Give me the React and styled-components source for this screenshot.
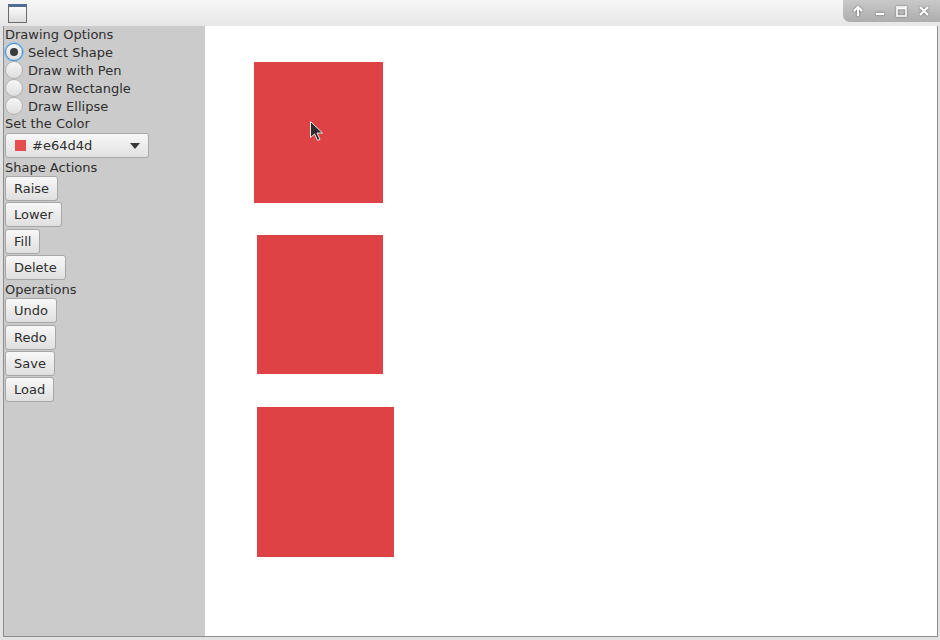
// Drawing app window: options sidebar on the left, shape canvas on the right

import React from 'react'
import styled, { createGlobalStyle } from 'styled-components'

const GlobalStyle = createGlobalStyle`
  html, body {
    margin: 0;
    padding: 0;
  }
  body {
    font-family: "DejaVu Sans", "Liberation Sans", sans-serif;
    background: #e4e4e4;
  }
`

//Styles
const Screen = styled.div`
  width: 940px;
  height: 640px;
  display: flex;
  flex-direction: column;
  overflow: hidden;
  background: #e2e2e2;
`

const TitleBar = styled.div`
  height: 26px;
  flex: none;
  display: flex;
  justify-content: space-between;
  align-items: flex-start;
  background: linear-gradient(#f6f6f6, #e6e6e6);
`

const AppIcon = styled.div`
  margin: 4px 0 0 8px;
  width: 17px;
  height: 15px;
  border: 1px solid #6c6c6c;
  border-top: 3px solid #4f6e92;
  background: linear-gradient(#fbfbfb, #dcdcdc);
`

const Controls = styled.div`
  width: 97px;
  height: 22px;
  display: flex;
  align-items: center;
  justify-content: space-around;
  padding: 0 5px 0 4px;
  box-sizing: border-box;
  background: linear-gradient(#c9c9c9, #adadad);
  border-bottom-left-radius: 7px;
  svg {
    filter: drop-shadow(0 0 1px rgba(0, 0, 0, 0.45));
  }
`

const Frame = styled.div`
  margin: 0 2px 0 3px;
  height: 610px;
  display: flex;
  border: 1px solid #8e8e8e;
  border-top: none;
  background: #fff;
`

const Sidebar = styled.div`
  width: 201px;
  flex: none;
  background: #cbcbcb;
  padding-left: 1px;
  box-sizing: border-box;
  display: flex;
  flex-direction: column;
  align-items: flex-start;
  color: #2e2e2e;
  font-size: 13px;
`

const Label = styled.div`
  height: 17px;
  line-height: 17px;
`

const RadioRow = styled.div`
  height: 18px;
  display: flex;
  align-items: center;
  gap: 5px;
`

const RadioDot = styled.span`
  width: 16px;
  height: 16px;
  border-radius: 50%;
  border: 1px solid ${p => (p.$on ? '#3a8ad0' : '#b3b3b3')};
  background: linear-gradient(#f7f7f7, #dedede);
  box-shadow: ${p => (p.$on ? '0 0 0 1px #8fc0ea' : 'none')};
  display: flex;
  align-items: center;
  justify-content: center;
  &::after {
    content: '';
    width: 8px;
    height: 8px;
    border-radius: 50%;
    background: ${p => (p.$on ? '#3a3a3a' : 'transparent')};
  }
`

const Picker = styled.div`
  margin: 1px 0 1px;
  width: 144px;
  height: 25px;
  box-sizing: border-box;
  border: 1px solid #a9a9a9;
  border-radius: 3px;
  background: linear-gradient(#f7f7f7, #e1e1e1);
  display: flex;
  align-items: center;
  padding: 0 8px 0 9px;
  gap: 6px;
`

const Swatch = styled.span`
  width: 11px;
  height: 11px;
  background: ${p => p.$color};
`

const Arrow = styled.span`
  margin-left: auto;
  width: 0;
  height: 0;
  border-left: 5px solid transparent;
  border-right: 5px solid transparent;
  border-top: 6px solid #3a3a3a;
`

const Button = styled.button`
  height: 25px;
  margin: 0 0 1.33px;
  padding: 0 8px;
  border: 1px solid #a7a7a7;
  border-radius: 3px;
  background: linear-gradient(#f8f8f8, #dfdfdf);
  font-family: inherit;
  font-size: 13px;
  color: #2e2e2e;
  line-height: 23px;
`

const Canvas = styled.div`
  flex: 1;
  position: relative;
  background: #fff;
`

const Shape = styled.div`
  position: absolute;
  background: #df4245;
`

const Pointer = styled.svg`
  position: absolute;
  left: 104px;
  top: 94px;
`

const shapes = [
  { left: 49, top: 36, width: 129, height: 141 },
  { left: 52, top: 209, width: 126, height: 139 },
  { left: 52, top: 381, width: 137, height: 150 },
]

const modes = ['Select Shape', 'Draw with Pen', 'Draw Rectangle', 'Draw Ellipse']

const App = () => {
  return (
    <>
      <GlobalStyle />
      <Screen>
        <TitleBar>
          <AppIcon />
          <Controls>
            <svg width="12" height="12" viewBox="0 0 12 12">
              <path d="M6 11V2M2 6l4-4 4 4" stroke="#fff" strokeWidth="2" fill="none" />
            </svg>
            <svg width="10" height="12" viewBox="0 0 10 12">
              <path d="M1 9h8" stroke="#fff" strokeWidth="2" />
            </svg>
            <svg width="11" height="11" viewBox="0 0 11 11">
              <rect x="1" y="1" width="9" height="9" stroke="#fff" strokeWidth="1.6" fill="none" />
              <path d="M1 2.5h9" stroke="#fff" strokeWidth="1.6" />
            </svg>
            <svg width="12" height="12" viewBox="0 0 12 12">
              <path d="M2 2l8 8M10 2l-8 8" stroke="#fff" strokeWidth="2" />
            </svg>
          </Controls>
        </TitleBar>

        <Frame>
          <Sidebar>
            <Label>Drawing Options</Label>
            {modes.map((m, i) => (
              <RadioRow key={m}>
                <RadioDot $on={i === 0} />
                {m}
              </RadioRow>
            ))}
            <Label>Set the Color</Label>
            <Picker>
              <Swatch $color="#e64d4d" />
              #e64d4d
              <Arrow />
            </Picker>
            <Label>Shape Actions</Label>
            <Button>Raise</Button>
            <Button>Lower</Button>
            <Button>Fill</Button>
            <Button>Delete</Button>
            <Label>Operations</Label>
            <Button>Undo</Button>
            <Button>Redo</Button>
            <Button>Save</Button>
            <Button>Load</Button>
          </Sidebar>

          <Canvas>
            {shapes.map((s, i) => (
              <Shape key={i} style={s} />
            ))}
            <Pointer width="16" height="22" viewBox="0 0 16 22">
              <path d="M1.5 1.5v16l4-3.5 3 6.5 2.5-1.2-3-6.3h5.5z" fill="#2d2d2d" stroke="#e8e8e8" strokeWidth="1" />
            </Pointer>
          </Canvas>
        </Frame>
      </Screen>
    </>
  )
}

export default App
